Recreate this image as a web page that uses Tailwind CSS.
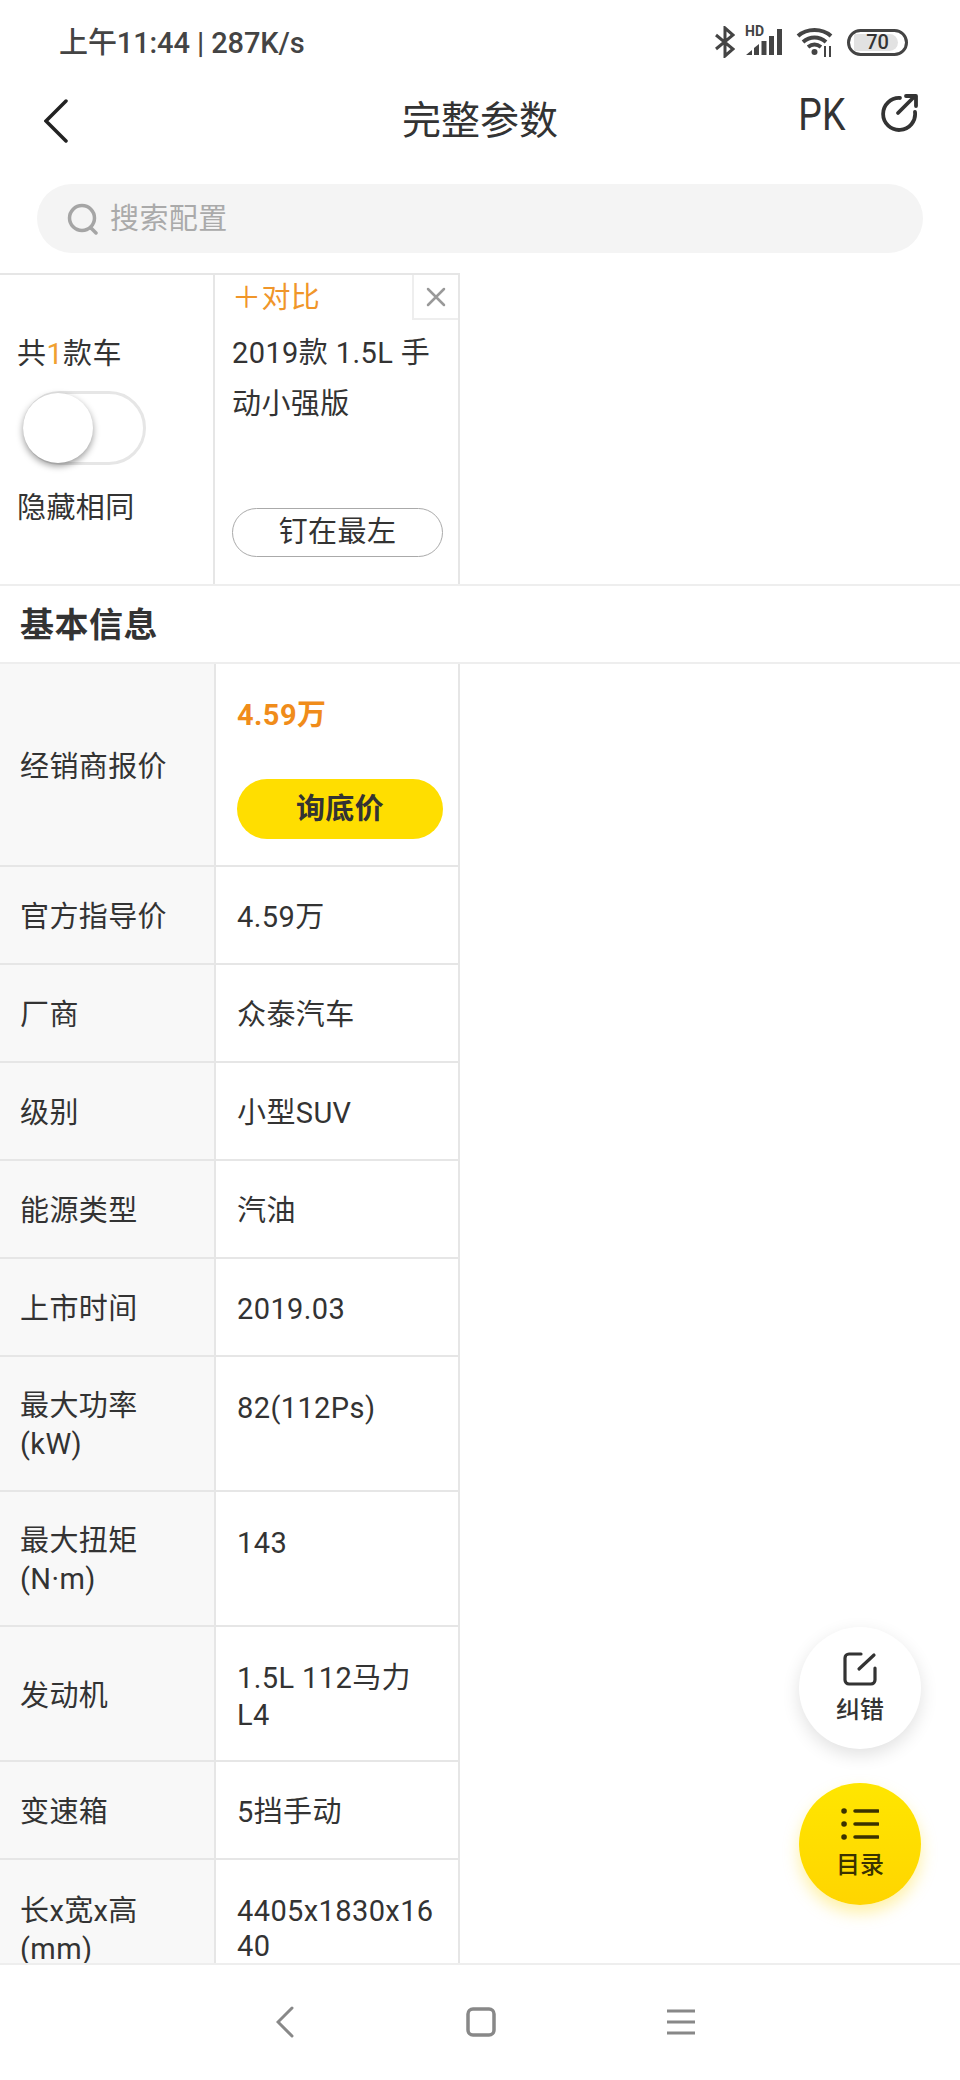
<!DOCTYPE html>
<html lang="zh-CN">
<head>
<meta charset="UTF-8">
<meta name="viewport" content="width=device-width, initial-scale=1.0">
<title>完整参数</title>
<script src="https://cdn.jsdelivr.net/npm/@tailwindcss/browser@4"></script>
</head>
<body class="bg-white">
<div class="relative flex flex-col w-[960px] h-[2080px] overflow-hidden bg-white text-[#333] text-[29px] tracking-[0.4px] font-['Roboto','Noto_Sans_CJK_SC',sans-serif]">

  <!-- 状态栏 -->
  <div class="flex items-center justify-between h-[84px] pl-[59px] pr-[52px] shrink-0">
    <span class="pt-[3px] text-[29px] font-medium text-[#444] tracking-[-0.1px]">上午11:44 | 287K/s</span>
    <div class="flex items-center">
      <svg class="w-[20px] h-[32px]" viewBox="0 0 20 32" fill="none" stroke="#444" stroke-width="3"><path d="M1 9 18 23 10 30V2l8 7L1 23"/></svg>
      <div class="relative w-[38px] h-[30px] ml-[10px]">
        <span class="absolute left-0 -top-[3px] text-[14px] leading-[14px] font-bold tracking-normal text-[#444]">HD</span>
        <svg class="absolute inset-0 w-[38px] h-[30px]" viewBox="0 0 38 30" fill="#444"><path d="M1 28 7 23V28ZM9 21 14 17V28H9ZM16.500 14H21.500V28H16.500ZM24 9H29V28H24ZM32 2H37V28H32Z"/></svg>
      </div>
      <svg class="w-[38px] h-[30px] ml-[13px]" viewBox="0 0 38 30" fill="none" stroke="#444" stroke-width="4"><path d="M2 9C11 1 26 1 35 9M7 15C14 9 23 9 30 15M12 20C16 17 21 17 25 20"/><circle cx="18.500" cy="25" r="3" fill="#444" stroke="none"/><path stroke-width="2" d="M29 19V30M34 19V30"/></svg>
      <div class="relative flex items-center justify-center w-[61px] h-[27px] ml-[13px] rounded-full border-[3px] border-[#444] overflow-hidden">
        <div class="absolute left-[4px] top-[2px] bottom-[2px] w-[44px] bg-[#e2e2e2] rounded-r-full"></div>
        <span class="relative text-[20px] leading-none font-medium tracking-normal text-[#333]">70</span>
      </div>
    </div>
  </div>

  <!-- 标题栏 -->
  <div class="grid grid-cols-[1fr_auto_1fr] h-[100px] shrink-0">
    <div class="pl-[44px] pt-[15px]">
      <svg class="w-[24px] h-[44px]" viewBox="0 0 24 44" fill="none" stroke="#222" stroke-width="3.500" stroke-linecap="round"><path d="M22 2 2 22 22 42"/></svg>
    </div>
    <div class="pt-[10px] text-[39px] leading-[54px] tracking-normal text-[#333]">完整参数</div>
    <div class="flex justify-end pr-[40px] pt-[9px]">
      <span class="text-[44px] leading-[44px] tracking-normal text-[#333] mr-[35px] origin-right scale-x-[0.85]">PK</span>
      <svg class="w-[40px] h-[40px] -mt-[1px]" viewBox="0 0 40 40" fill="none" stroke="#333" stroke-width="3.800" stroke-linecap="round" stroke-linejoin="round"><path d="M20 6A16 16 0 1 0 35 20"/><path d="M18 21 35 4M26 4H36V14"/></svg>
    </div>
  </div>

  <!-- 搜索 -->
  <div class="px-[37px] shrink-0">
    <div class="flex items-center h-[69px] rounded-full bg-[#f4f4f4] pl-[30px]">
      <svg class="w-[32px] h-[32px]" viewBox="0 0 32 32" fill="none" stroke="#a5a5a5" stroke-width="3.500" stroke-linecap="round"><circle cx="15" cy="15" r="12.500"/><path d="M24 25 29 30"/></svg>
      <span class="ml-[11px] pt-[2px] text-[29px] text-[#aaa]">搜索配置</span>
    </div>
  </div>

  <!-- 车型表头 -->
  <div class="mt-[20px] flex flex-col shrink-0">
    <div class="flex w-[460px] h-[311px] border-t-2 border-[#e6e6e6]">
      <div class="flex flex-col w-[215px] pl-[17px] border-r-2 border-[#e6e6e6]">
        <div class="mt-[59px] leading-[40px]">共<span class="text-[#f0a030]">1</span>款车</div>
        <div class="relative mt-[17px] ml-[6px] w-[123px] h-[74px] rounded-full border-[3px] border-[#e6e6e6]">
          <div class="absolute -left-[3px] -top-[1px] w-[70px] h-[70px] rounded-full bg-white shadow-[0_3px_7px_rgba(0,0,0,0.4)]"></div>
        </div>
        <div class="mt-[23px] leading-[40px]">隐藏相同</div>
      </div>
      <div class="relative flex-1 border-r-2 border-[#e6e6e6] pl-[17px]">
        <div class="h-[46px] text-[#f0962a] text-[29px] leading-[46px]">＋对比</div>
        <div class="absolute right-0 top-0 flex items-center justify-center w-[46px] h-[45px] border-l-2 border-b-2 border-[#eee]">
          <svg class="w-[20px] h-[20px]" viewBox="0 0 20 20" stroke="#999" stroke-width="2.500" stroke-linecap="round"><path d="M2 2 18 18M18 2 2 18"/></svg>
        </div>
        <div class="w-[205px] mt-[7px] text-[29px] leading-[51px]">2019款 1.5L 手动小强版</div>
        <div class="flex items-center justify-center w-[211px] h-[49px] mt-[78px] rounded-full border border-[#aaa] text-[29px]">钉在最左</div>
      </div>
    </div>

    <!-- 基本信息 -->
    <div class="flex items-center h-[80px] pl-[20px] pt-[2px] border-y-2 border-[#eeeeee] text-[34px] tracking-[0.5px] font-bold text-[#333]">基本信息</div>
  </div>

  <!-- 参数表 -->
  <div class="flex-1 overflow-hidden border-b-2 border-[#eeeeee]">
    <div class="flex h-[203px] w-[460px] border-b-2 border-[#e6e6e6]">
      <div class="flex items-center w-[216px] pl-[20px] pt-[6px] bg-[#f8f8f8] border-r-2 border-[#e6e6e6]">经销商报价</div>
      <div class="flex-1 border-r-2 border-[#e6e6e6] pl-[21px] pt-[31px]">
        <div class="text-[#f08c1a] font-bold leading-[40px]">4.59万</div>
        <div class="flex items-center justify-center w-[206px] h-[60px] mt-[44px] pt-[2px] rounded-full bg-[#ffde00] font-bold text-[#333]">询底价</div>
      </div>
    </div>
    <div class="flex h-[98px] w-[460px] border-b-2 border-[#e6e6e6]">
      <div class="flex items-center w-[216px] pl-[20px] pt-[6px] bg-[#f8f8f8] border-r-2 border-[#e6e6e6]">官方指导价</div>
      <div class="flex items-center flex-1 pl-[21px] pt-[6px] border-r-2 border-[#e6e6e6]">4.59万</div>
    </div>
    <div class="flex h-[98px] w-[460px] border-b-2 border-[#e6e6e6]">
      <div class="flex items-center w-[216px] pl-[20px] pt-[6px] bg-[#f8f8f8] border-r-2 border-[#e6e6e6]">厂商</div>
      <div class="flex items-center flex-1 pl-[21px] pt-[6px] border-r-2 border-[#e6e6e6]">众泰汽车</div>
    </div>
    <div class="flex h-[98px] w-[460px] border-b-2 border-[#e6e6e6]">
      <div class="flex items-center w-[216px] pl-[20px] pt-[6px] bg-[#f8f8f8] border-r-2 border-[#e6e6e6]">级别</div>
      <div class="flex items-center flex-1 pl-[21px] pt-[6px] border-r-2 border-[#e6e6e6]">小型SUV</div>
    </div>
    <div class="flex h-[98px] w-[460px] border-b-2 border-[#e6e6e6]">
      <div class="flex items-center w-[216px] pl-[20px] pt-[6px] bg-[#f8f8f8] border-r-2 border-[#e6e6e6]">能源类型</div>
      <div class="flex items-center flex-1 pl-[21px] pt-[6px] border-r-2 border-[#e6e6e6]">汽油</div>
    </div>
    <div class="flex h-[98px] w-[460px] border-b-2 border-[#e6e6e6]">
      <div class="flex items-center w-[216px] pl-[20px] pt-[6px] bg-[#f8f8f8] border-r-2 border-[#e6e6e6]">上市时间</div>
      <div class="flex items-center flex-1 pl-[21px] pt-[6px] border-r-2 border-[#e6e6e6]">2019.03</div>
    </div>
    <div class="flex h-[135px] w-[460px] border-b-2 border-[#e6e6e6]">
      <div class="flex items-center w-[216px] pl-[20px] pr-[10px] pt-[3px] leading-[38px] bg-[#f8f8f8] border-r-2 border-[#e6e6e6]">最大功率<br>(kW)</div>
      <div class="flex-1 pl-[21px] pt-[32px] leading-[38px] border-r-2 border-[#e6e6e6]">82(112Ps)</div>
    </div>
    <div class="flex h-[135px] w-[460px] border-b-2 border-[#e6e6e6]">
      <div class="flex items-center w-[216px] pl-[20px] pr-[10px] pt-[3px] leading-[38px] bg-[#f8f8f8] border-r-2 border-[#e6e6e6]">最大扭矩<br>(N·m)</div>
      <div class="flex-1 pl-[21px] pt-[32px] leading-[38px] border-r-2 border-[#e6e6e6]">143</div>
    </div>
    <div class="flex h-[135px] w-[460px] border-b-2 border-[#e6e6e6]">
      <div class="flex items-center w-[216px] pl-[20px] pt-[6px] bg-[#f8f8f8] border-r-2 border-[#e6e6e6]">发动机</div>
      <div class="flex items-center flex-1 pl-[21px] pr-[20px] pt-[6px] leading-[37px] border-r-2 border-[#e6e6e6]">1.5L 112马力 L4</div>
    </div>
    <div class="flex h-[98px] w-[460px] border-b-2 border-[#e6e6e6]">
      <div class="flex items-center w-[216px] pl-[20px] pt-[6px] bg-[#f8f8f8] border-r-2 border-[#e6e6e6]">变速箱</div>
      <div class="flex items-center flex-1 pl-[21px] pt-[6px] border-r-2 border-[#e6e6e6]">5挡手动</div>
    </div>
    <div class="flex h-[135px] w-[460px]">
      <div class="flex items-center w-[216px] pl-[20px] pr-[10px] pt-[4px] leading-[38px] bg-[#f8f8f8] border-r-2 border-[#e6e6e6]">长x宽x高<br>(mm)</div>
      <div class="flex items-center flex-1 pl-[21px] pr-[20px] pt-[3px] leading-[35px] break-all border-r-2 border-[#e6e6e6]">4405x1830x1640</div>
    </div>
  </div>

  <!-- 底部导航 -->
  <div class="flex items-center justify-center h-[115px] shrink-0 pb-[2px]">
    <svg class="w-[18px] h-[32px] ml-[10px]" viewBox="0 0 18 32" fill="none" stroke="#888" stroke-width="3" stroke-linecap="round"><path d="M16 2 2 16 16 30"/></svg>
    <svg class="w-[30px] h-[30px] ml-[172px]" viewBox="0 0 30 30" fill="none" stroke="#888" stroke-width="3.500"><rect x="2" y="2" width="26" height="26" rx="5"/></svg>
    <svg class="w-[28px] h-[26px] ml-[171px]" viewBox="0 0 28 26" stroke="#888" stroke-width="3"><path d="M0 2H28M0 13H28M0 24H28"/></svg>
  </div>

  <!-- 悬浮按钮 -->
  <div class="absolute left-[799px] top-[1627px] flex flex-col gap-[34px]">
    <div class="flex flex-col items-center w-[122px] h-[122px] pt-[25px] rounded-full bg-white shadow-[0_6px_18px_rgba(0,0,0,0.12)]">
      <svg class="w-[34px] h-[34px]" viewBox="0 0 34 34" fill="none" stroke="#333" stroke-width="3.200" stroke-linecap="round" stroke-linejoin="round"><path d="M18 2H6A4 4 0 0 0 2 6V28A4 4 0 0 0 6 32H28A4 4 0 0 0 32 28V16M16 17 31 3"/></svg>
      <span class="mt-[6px] text-[24px] leading-[36px] font-medium tracking-normal text-[#333]">纠错</span>
    </div>
    <div class="flex flex-col items-center w-[122px] h-[122px] pt-[24px] rounded-full bg-gradient-to-b from-[#ffe600] to-[#ffd500] shadow-[0_8px_16px_rgba(255,215,0,0.35)]">
      <svg class="w-[38px] h-[34px]" viewBox="0 0 38 34" stroke="#3a3200" stroke-width="3.500" stroke-linecap="round"><path d="M14 4H37M14 17H37M14 30H37"/><path stroke-width="5.500" d="M3 4H3.100M3 17H3.100M3 30H3.100"/></svg>
      <span class="mt-[7px] text-[24px] leading-[34px] font-medium tracking-normal text-[#3a3200]">目录</span>
    </div>
  </div>
</div>
</body>
</html>
